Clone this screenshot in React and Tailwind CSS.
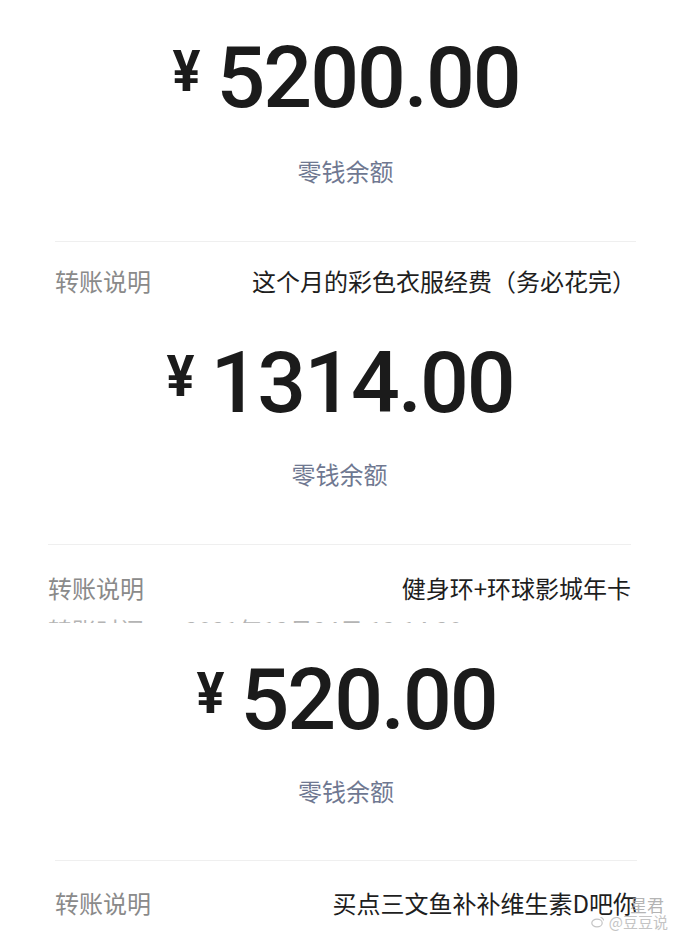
import React from 'react';

const cjk = { fontFamily: "'Noto Sans CJK SC', 'Noto Sans', sans-serif" };
const num = { fontFamily: "Roboto, 'Liberation Sans', sans-serif" };

const Amount = ({ value }) => (
  <div className="flex items-start justify-center">
    <span className="mt-[7px] mr-[14px] text-[58px] leading-none font-bold text-[#1b1b1b] scale-x-90" style={num}>
      ¥
    </span>
    <span className="text-[86px] leading-none font-medium tracking-[-2px] text-[#1b1b1b]" style={num}>
      {value}
    </span>
  </div>
);

const Balance = ({ className }) => (
  <div className={`text-center text-[24px] leading-[24px] text-[#6f7891] ${className}`} style={cjk}>
    零钱余额
  </div>
);

const Row = ({ label, value, className }) => (
  <div className={`flex items-center justify-between text-[24px] leading-[24px] ${className}`} style={cjk}>
    <span className="text-[#8a8a8a]">{label}</span>
    <span className="text-[#1e1e1e]">{value}</span>
  </div>
);

const Divider = ({ className }) => <div className={`h-px bg-[#efefef] ${className}`} />;

export default function App() {
  return (
    <div className="relative w-[690px] h-[934px] overflow-hidden bg-white">
      {/* first transfer */}
      <section className="pt-[35px] pl-[55px] pr-[54px]">
        <Amount value="5200.00" />
        <Balance className="mt-[38px]" />
        <Divider className="mt-[58px]" />
        <Row className="mt-[27px]" label="转账说明" value="这个月的彩色衣服经费（务必花完）" />
      </section>

      {/* second transfer */}
      <section className="mt-[47px] pl-[48px] pr-[59px]">
        <Amount value="1314.00" />
        <Balance className="mt-[36px]" />
        <Divider className="mt-[58px]" />
        <Row className="mt-[31px]" label="转账说明" value="健身环+环球影城年卡" />
        {/* top edge of the next row, cut off by the crop */}
        <div className="mt-[18px] h-[5px] overflow-hidden">
          <div className="flex text-[24px] leading-[24px] text-[#b4b4b4]" style={cjk}>
            <span className="w-[137px]">转账时间</span>
            <span>2021年12月24日 13:14:20</span>
          </div>
        </div>
      </section>

      {/* third transfer */}
      <section className="mt-[34px] pl-[55px] pr-[53px]">
        <Amount value="520.00" />
        <Balance className="mt-[36px]" />
        <Divider className="mt-[57px]" />
        <Row className="mt-[30px]" label="转账说明" value="买点三文鱼补补维生素D吧你" />
      </section>

      {/* watermark */}
      <div className="absolute right-[22px] bottom-[4px] flex flex-col items-end text-[#a0a0a0]/80" style={cjk}>
        <span className="text-[17px] leading-[18px] mr-[4px]">星君</span>
        <div className="flex items-center gap-[4px] text-[15px] leading-[16px] text-[#c4c4c4]">
          <svg width="14" height="12" viewBox="0 0 14 12" fill="none" stroke="#c4c4c4" strokeWidth="1.2">
            <ellipse cx="6" cy="7" rx="5.2" ry="3.8" />
            <path d="M9.5 1.5a3 3 0 0 1 3 3" />
          </svg>
          <span>@豆豆说</span>
        </div>
      </div>
    </div>
  );
}
